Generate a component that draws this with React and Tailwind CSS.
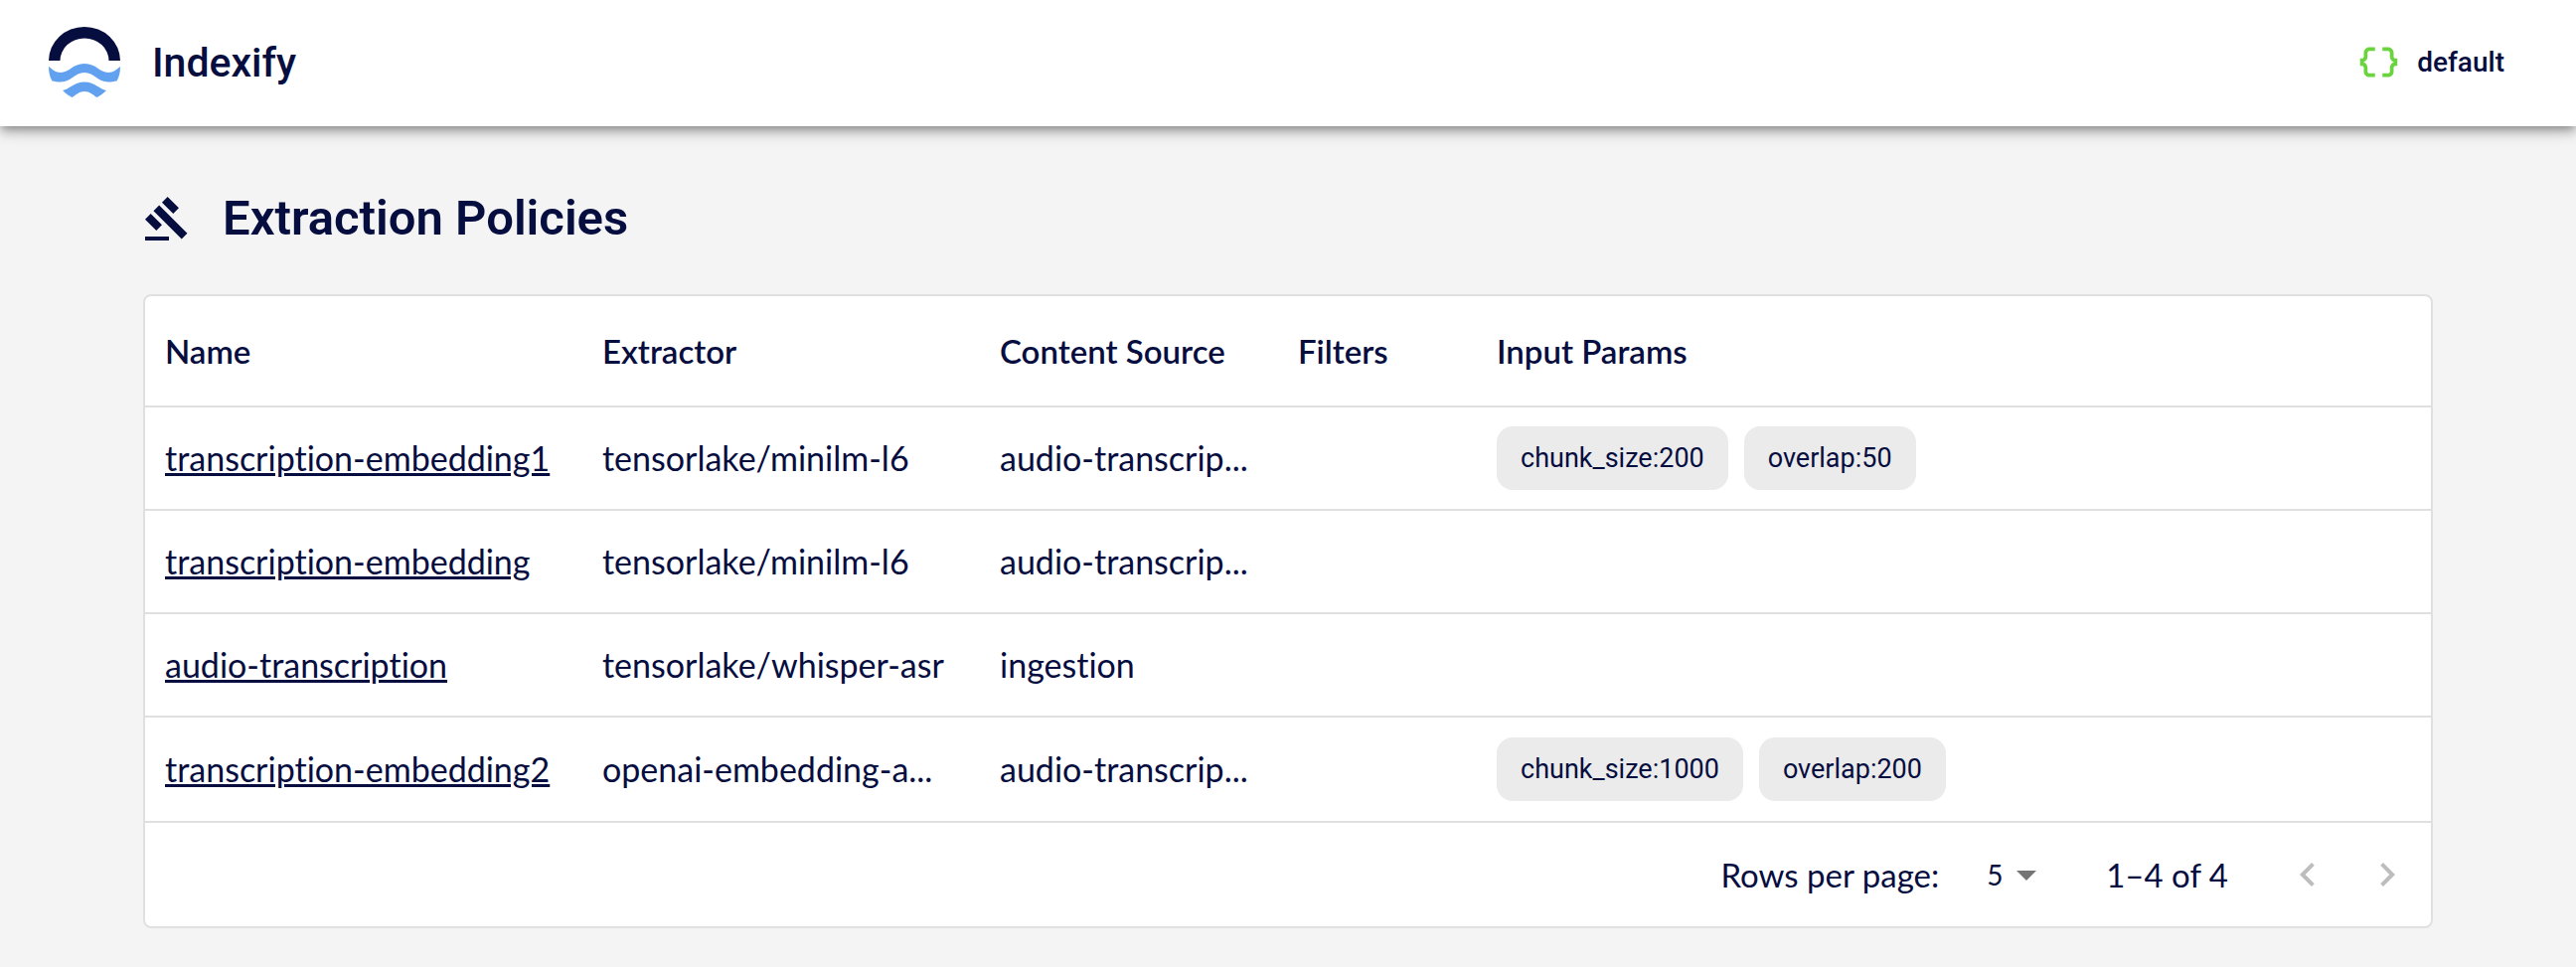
const policies = [
  { name: "transcription-embedding1", extractor: "tensorlake/minilm-l6", source: "audio-transcrip...", params: ["chunk_size:200", "overlap:50"] },
  { name: "transcription-embedding", extractor: "tensorlake/minilm-l6", source: "audio-transcrip...", params: [] },
  { name: "audio-transcription", extractor: "tensorlake/whisper-asr", source: "ingestion", params: [] },
  { name: "transcription-embedding2", extractor: "openai-embedding-a...", source: "audio-transcrip...", params: ["chunk_size:1000", "overlap:200"] },
];

const columns = [
  { label: "Name", width: "w-[440px]" },
  { label: "Extractor", width: "w-[400px]" },
  { label: "Content Source", width: "w-[300px]" },
  { label: "Filters", width: "w-[200px]" },
  { label: "Input Params", width: "" },
];

function Logo() {
  return (
    <svg className="size-[72px] shrink-0" viewBox="0 0 72 72" aria-hidden="true">
      <path d="M0 34A36 34 0 0 1 72 34H60.500A24.500 22.500 0 0 0 11.500 34Z" fill="#060d3f" />
      <path d="M0 40C4 43 7 46 12 46C21 46 24 37 36 37C48 37 51 46 60 46C65 46 68 43 72 40C72 46 71 50 68.500 54.500C66 55 63 55.500 60 55.500C49 55.500 46 46 36 46C26 46 23 55.500 12 55.500C9 55.500 6 55 3.500 54.500C1 50 0 46 0 40Z" fill="#62a1f0" />
      <path d="M14 64C21 63 25 55.500 36 55.500C47 55.500 51 63 58 64C55 67 52 69 48.500 71C44 68 41 65 36 65C31 65 28 68 23.500 71C20 69 17 67 14 64Z" fill="#62a1f0" />
    </svg>
  );
}

function Glyph({ d, className }) {
  return (
    <svg className={className} viewBox="0 0 24 24" fill="currentColor" aria-hidden="true">
      <path d={d} />
    </svg>
  );
}

const gavel =
  "M1 21h12v2H1zM5.245 8.070l2.830-2.827 14.140 14.142-2.828 2.828zM12.317 1l5.657 5.656-2.830 2.830-5.654-5.660zM3.825 9.485l5.657 5.657-2.828 2.828-5.657-5.657z";
const braces =
  "M4 7v2c0 .55-.45 1-1 1H2v4h1c.55 0 1 .45 1 1v2c0 1.650 1.350 3 3 3h3v-2H7c-.55 0-1-.45-1-1v-2c0-1.300-.84-2.420-2-2.830v-.34C5.160 11.420 6 10.300 6 9V7c0-.55.45-1 1-1h3V4H7C5.350 4 4 5.350 4 7zm17 3c-.55 0-1-.45-1-1V7c0-1.650-1.350-3-3-3h-3v2h3c.55 0 1 .45 1 1v2c0 1.300.84 2.420 2 2.830v.34c-1.160.41-2 1.520-2 2.830v2c0 .55-.45 1-1 1h-3v2h3c1.650 0 3-1.350 3-3v-2c0-.55.45-1 1-1h1v-4h-1z";
const chevronLeft = "M15.410 7.410 14 6l-6 6 6 6 1.410-1.410L10.830 12z";
const chevronRight = "M10 6 8.590 7.410 13.170 12l-4.580 4.590L10 18l6-6z";

export default function App() {
  return (
    <div className="min-h-screen bg-[#f4f4f4] font-['Roboto',sans-serif] text-[#060d3f]">
      <header className="relative flex h-[127px] items-center justify-between bg-white pr-[72px] pb-0.5 pl-[49px] shadow-[0_4px_8px_-2px_rgba(0,0,0,0.3),0_8px_10px_0_rgba(0,0,0,0.14),0_2px_20px_0_rgba(0,0,0,0.12)]">
        <a href="#home" className="flex items-center gap-8 text-[41px] leading-[48px] font-medium">
          <Logo />
          Indexify
        </a>
        <button type="button" className="flex items-center gap-4 text-[28px] leading-9 font-medium">
          <Glyph d={braces} className="size-[45px] text-[#6ad43f]" />
          default
        </button>
      </header>

      <main className="px-36 pt-[65px] pb-10">
        <h1 className="flex h-14 items-center gap-8 text-[49px] leading-[56px] font-semibold">
          <Glyph d={gavel} className="size-12" />
          Extraction Policies
        </h1>

        <section className="mt-12 rounded-lg border-2 border-[#e0e0e0] bg-white font-['Lato',sans-serif] text-[33px] leading-10 [font-variant-ligatures:no-common-ligatures]">
          <table className="w-full table-fixed border-collapse text-left">
            <thead>
              <tr className="h-[111px] border-b-2 border-[#e0e0e0]">
                {columns.map((c) => (
                  <th key={c.label} scope="col" className={`${c.width} px-5 font-semibold`}>
                    {c.label}
                  </th>
                ))}
              </tr>
            </thead>
            <tbody className="text-[34px]">
              {policies.map((p) => (
                <tr key={p.name} className="h-[104px] border-b-2 border-[#e0e0e0] last:h-[106px]">
                  <td className="px-5 whitespace-nowrap">
                    <a href={`#${p.name}`} className="underline decoration-[3px]">{p.name}</a>
                  </td>
                  <td className="px-5 whitespace-nowrap">{p.extractor}</td>
                  <td className="px-5 whitespace-nowrap">{p.source}</td>
                  <td />
                  <td className="px-5">
                    <div className="flex gap-4">
                      {p.params.map((param) => (
                        <span key={param} className="flex h-16 items-center rounded-2xl bg-[#ebebeb] px-6 font-['Roboto',sans-serif] text-[27px] leading-8">
                          {param}
                        </span>
                      ))}
                    </div>
                  </td>
                </tr>
              ))}
            </tbody>
          </table>

          <div className="flex h-[104px] items-center justify-end pr-1">
            <label htmlFor="rows-per-page">Rows per page:</label>
            <div className="relative ml-7 flex items-center">
              <select id="rows-per-page" defaultValue="5" className="h-14 w-[84px] appearance-none bg-transparent pl-5 text-[28px] leading-10">
                <option>5</option>
                <option>10</option>
                <option>25</option>
              </select>
              <Glyph d="M7 10l5 5 5-5z" className="pointer-events-none absolute right-0 size-12 text-[#757575]" />
            </div>
            <span className="ml-14">1–4 of 4</span>
            <div className="ml-10 flex text-[#bdbdbd]">
              <button type="button" aria-label="Previous page" disabled className="p-4">
                <Glyph d={chevronLeft} className="size-12" />
              </button>
              <button type="button" aria-label="Next page" disabled className="p-4">
                <Glyph d={chevronRight} className="size-12" />
              </button>
            </div>
          </div>
        </section>
      </main>
    </div>
  );
}
